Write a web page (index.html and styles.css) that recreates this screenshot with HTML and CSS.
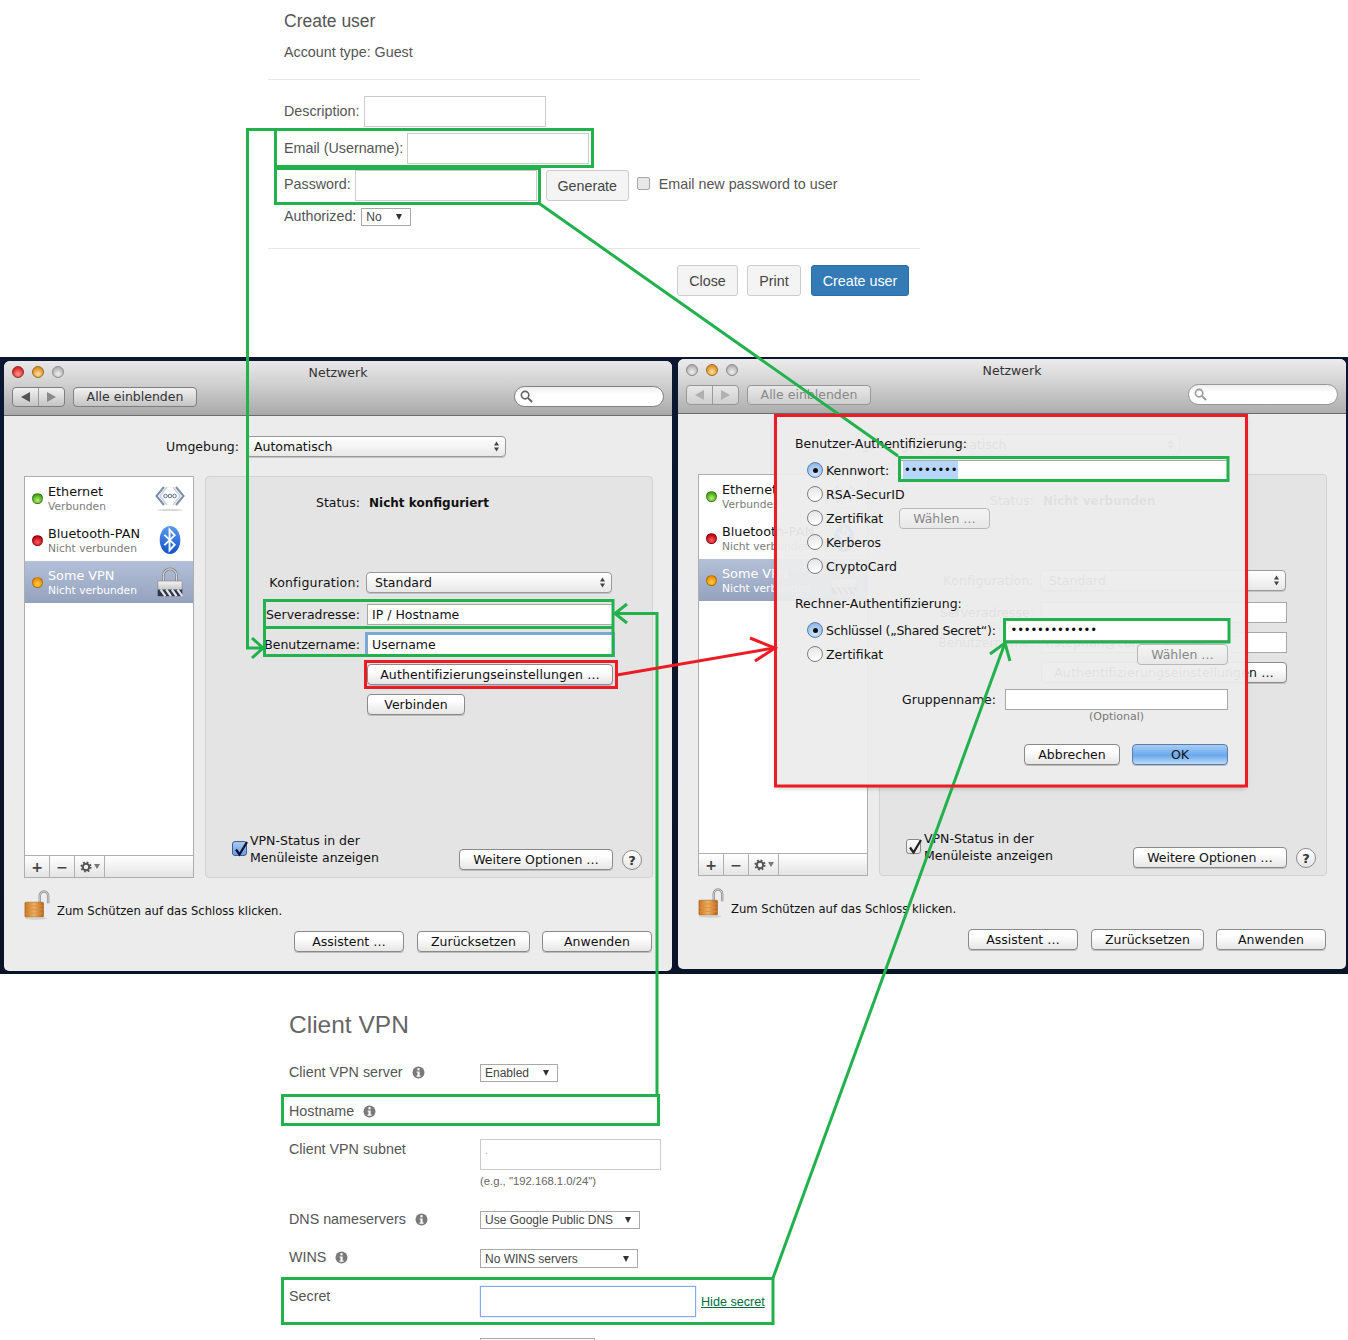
FILE: index.html
```html
<!DOCTYPE html>
<html lang="de">
<head>
<meta charset="utf-8">
<title>VPN setup</title>
<link rel="stylesheet" href="styles.css">
</head>
<body>
<svg class="defs" width="0" height="0" aria-hidden="true">
  <defs>
    <linearGradient id="gBt" x1="0" y1="0" x2="0" y2="1"><stop offset="0" stop-color="#5a9cf0"/><stop offset="1" stop-color="#1450c8"/></linearGradient>
    <linearGradient id="gLockG" x1="0" y1="0" x2="1" y2="0"><stop offset="0" stop-color="#c9741e"/><stop offset=".5" stop-color="#f0b060"/><stop offset="1" stop-color="#b8641a"/></linearGradient>
    <linearGradient id="gSilver" x1="0" y1="0" x2="0" y2="1"><stop offset="0" stop-color="#f4f4f4"/><stop offset="1" stop-color="#a8a8a8"/></linearGradient>
    <symbol id="i-eth" viewBox="0 0 30 28">
      <path d="M9 3 1.5 12 9 21M21 3 28.500 12 21 21" fill="none" stroke="#7d8ea8" stroke-width="2"/>
      <path d="M12 3 5 12 12 21M18 3 25 12 18 21" fill="none" stroke="#c6cfdc" stroke-width="1.400"/>
      <circle cx="10.500" cy="12" r="1.800" fill="none" stroke="#5f6f88"/><circle cx="15" cy="12" r="1.800" fill="none" stroke="#5f6f88"/><circle cx="19.500" cy="12" r="1.800" fill="none" stroke="#5f6f88"/>
      <ellipse cx="15" cy="26" rx="13" ry="1" fill="#d8d8d8"/>
    </symbol>
    <symbol id="i-bt" viewBox="0 0 24 32">
      <ellipse cx="12" cy="16" rx="11" ry="15" fill="url(#gBt)"/>
      <path d="M6 10.500 17 21 11.500 27V5L17 11 6 21.500" fill="none" stroke="#fff" stroke-width="2"/>
    </symbol>
    <symbol id="i-vpn" viewBox="0 0 28 32">
      <path d="M7 15V9a7 7 0 0 1 14 0v6" fill="none" stroke="#8a8a8a" stroke-width="3"/>
      <path d="M7 15V9a7 7 0 0 1 14 0v6" fill="none" stroke="#e6e6e6" stroke-width="1"/>
      <rect x="1" y="15" width="26" height="16" rx="1" fill="url(#gSilver)" stroke="#777" stroke-width=".6"/>
      <rect x="1" y="24" width="26" height="7" fill="#2c3650"/>
      <path d="M4 24l5 7M10 24l5 7M16 24l5 7M22 24l5 7" stroke="#e4e4e4" stroke-width="2.400"/>
    </symbol>
    <symbol id="i-lock" viewBox="0 0 28 32">
      <path d="M17 15V6a4.500 4.500 0 0 1 9 0v8" fill="none" stroke="#8e8e8e" stroke-width="2.600"/>
      <path d="M17 15V6a4.500 4.500 0 0 1 9 0v8" fill="none" stroke="#e8e8e8" stroke-width=".8"/>
      <rect x="1" y="13" width="20" height="16" rx="1" fill="url(#gLockG)" stroke="#a05c18" stroke-width=".6"/>
      <path d="M2 17h18M2 21h18M2 25h18" stroke="#d89048" stroke-width="1"/>
      <ellipse cx="13" cy="30.500" rx="12" ry="1.300" fill="#d0d0d0"/>
    </symbol>
    <symbol id="i-search" viewBox="0 0 14 14">
      <circle cx="5.500" cy="5.500" r="4" fill="none" stroke="#666" stroke-width="1.800"/>
      <path d="M8.500 8.500 13 13" stroke="#666" stroke-width="2.200"/>
    </symbol>
    <symbol id="i-updown" viewBox="0 0 7 13">
      <path d="M3.500 1.500 6 5.500H1zM3.500 11.500 1 7.500h5z" fill="#444"/>
    </symbol>
    <symbol id="i-gear" viewBox="0 0 12 12">
      <circle cx="6" cy="6" r="3.200" fill="none" stroke="#555" stroke-width="2"/>
      <circle cx="6" cy="6" r="4.700" fill="none" stroke="#555" stroke-width="1.800" stroke-dasharray="1.800 1.900"/>
    </symbol>
    <symbol id="i-info" viewBox="0 0 13 13">
      <circle cx="6.500" cy="6.500" r="6" fill="#7a7a7a"/>
      <rect x="5.400" y="2.200" width="2.200" height="2.100" fill="#fff"/>
      <path d="M4.600 5.400h3v4.100h1v1.200H4.500V9.500h1V6.600h-.9z" fill="#fff"/>
    </symbol>
  </defs>
</svg>

<main class="page">

  <section class="create">
    <header class="create-head">
      <h2 class="create-title">Create user</h2>
      <p class="create-type">Account type: Guest</p>
    </header>
    <div class="create-form">
      <div class="web-row"><span class="web-label">Description:</span><span class="web-input"></span></div>
      <div class="web-row"><span class="web-label">Email (Username):</span><span class="web-input"></span></div>
      <div class="web-row web-row-pw"><span class="web-label">Password:</span><span class="web-input"></span><span class="web-btn web-btn-gen">Generate</span><span class="web-check"></span><span class="web-check-label">Email new password to user</span></div>
      <div class="web-row web-row-auth"><span class="web-label">Authorized:</span><span class="web-select web-select-auth">No<i class="caret"></i></span></div>
    </div>
    <footer class="create-foot">
      <span class="web-btn web-btn-lg w-close">Close</span>
      <span class="web-btn web-btn-lg w-print">Print</span>
      <span class="web-btn web-btn-lg web-btn-primary">Create user</span>
    </footer>
  </section>

  <section class="desktop">
    <article class="win win-a">
      <div class="titlebar">
        <div class="lights"><i class="light red"></i><i class="light amber"></i><i class="light off"></i></div>
        <div class="wintitle">Netzwerk</div>
        <div class="toolbar">
          <div class="seg"><span class="seg-cell"><i class="tri tri-l"></i></span><span class="seg-cell"><i class="tri tri-r"></i></span></div>
          <span class="tool-btn">Alle einblenden</span>
          <span class="search"><svg class="search-ico"><use href="#i-search"/></svg></span>
        </div>
      </div>
      <div class="winbody">
        <div class="env"><span class="env-label">Umgebung:</span><span class="mac-select env-select">Automatisch<svg class="updown"><use href="#i-updown"/></svg></span></div>
        <div class="split">
          <div class="svc-list">
            <div class="svc"><i class="dot dot-green"></i><div class="svc-text"><b>Ethernet</b><small>Verbunden</small></div><svg class="svc-ico"><use href="#i-eth"/></svg></div>
            <div class="svc"><i class="dot dot-red"></i><div class="svc-text"><b>Bluetooth-PAN</b><small>Nicht verbunden</small></div><svg class="svc-ico"><use href="#i-bt"/></svg></div>
            <div class="svc svc-sel"><i class="dot dot-orange"></i><div class="svc-text"><b>Some VPN</b><small>Nicht verbunden</small></div><svg class="svc-ico"><use href="#i-vpn"/></svg></div>
            <div class="svc-bar"><span class="bar-cell bar-sm">+</span><span class="bar-cell bar-sm">−</span><span class="bar-cell bar-gear"><svg class="gear"><use href="#i-gear"/></svg><i class="tri-d"></i></span></div>
          </div>
          <div class="panel">
            <div class="pf pf-status"><span class="pf-label">Status:</span><strong>Nicht konfiguriert</strong></div>
            <div class="pf pf-config"><span class="pf-label">Konfiguration:</span><span class="mac-select pf-field">Standard<svg class="updown"><use href="#i-updown"/></svg></span></div>
            <div class="pf pf-server"><span class="pf-label">Serveradresse:</span><span class="mac-input pf-field">IP / Hostname</span></div>
            <div class="pf pf-user"><span class="pf-label">Benutzername:</span><span class="mac-input pf-field is-focus">Username</span></div>
            <div class="pf pf-auth"><span class="pf-label"></span><span class="mac-btn pf-field">Authentifizierungseinstellungen …</span></div>
            <div class="pf pf-conn"><span class="pf-label"></span><span class="mac-btn btn-conn">Verbinden</span></div>
            <div class="panel-foot">
              <span class="mac-check is-blue"><svg viewBox="0 0 16 16"><path d="M3 7.500 6.500 12.500 14 0" fill="none" stroke="#101030" stroke-width="2.200"/></svg></span>
              <span class="check-text">VPN-Status in der<br>Menüleiste anzeigen</span>
              <span class="mac-btn btn-more">Weitere Optionen …</span>
              <span class="help">?</span>
            </div>
          </div>
        </div>
        <div class="lockline"><svg class="lock"><use href="#i-lock"/></svg><span>Zum Schützen auf das Schloss klicken.</span></div>
        <div class="actions"><span class="mac-btn btn-asst">Assistent …</span><span class="mac-btn btn-reset">Zurücksetzen</span><span class="mac-btn btn-apply">Anwenden</span></div>
      </div>
    </article>

    <article class="win win-b">
      <div class="titlebar">
        <div class="lights"><i class="light off"></i><i class="light amber"></i><i class="light off"></i></div>
        <div class="wintitle">Netzwerk</div>
        <div class="toolbar is-dim">
          <div class="seg"><span class="seg-cell"><i class="tri tri-l"></i></span><span class="seg-cell"><i class="tri tri-r"></i></span></div>
          <span class="tool-btn">Alle einblenden</span>
          <span class="search"><svg class="search-ico"><use href="#i-search"/></svg></span>
        </div>
      </div>
      <div class="winbody">
        <div class="env"><span class="env-label">Umgebung:</span><span class="mac-select env-select">Automatisch<svg class="updown"><use href="#i-updown"/></svg></span></div>
        <div class="split">
          <div class="svc-list">
            <div class="svc"><i class="dot dot-green"></i><div class="svc-text"><b>Ethernet</b><small>Verbunden</small></div><svg class="svc-ico"><use href="#i-eth"/></svg></div>
            <div class="svc"><i class="dot dot-red"></i><div class="svc-text"><b>Bluetooth-PAN</b><small>Nicht verbunden</small></div><svg class="svc-ico"><use href="#i-bt"/></svg></div>
            <div class="svc svc-sel"><i class="dot dot-orange"></i><div class="svc-text"><b>Some VPN</b><small>Nicht verbunden</small></div><svg class="svc-ico"><use href="#i-vpn"/></svg></div>
            <div class="svc-bar"><span class="bar-cell bar-sm">+</span><span class="bar-cell bar-sm">−</span><span class="bar-cell bar-gear"><svg class="gear"><use href="#i-gear"/></svg><i class="tri-d"></i></span></div>
          </div>
          <div class="panel">
            <div class="pf pf-status"><span class="pf-label">Status:</span><strong>Nicht verbunden</strong></div>
            <div class="pf pf-config"><span class="pf-label">Konfiguration:</span><span class="mac-select pf-field">Standard<svg class="updown"><use href="#i-updown"/></svg></span></div>
            <div class="pf pf-server"><span class="pf-label">Serveradresse:</span><span class="mac-input pf-field"></span></div>
            <div class="pf pf-user"><span class="pf-label">Benutzername:</span><span class="mac-input pf-field">r.stephan@consultant.de</span></div>
            <div class="pf pf-auth"><span class="pf-label"></span><span class="mac-btn pf-field">Authentifizierungseinstellungen …</span></div>
            <div class="panel-foot panel-foot-b">
              <span class="mac-check"><svg viewBox="0 0 16 16"><path d="M3 7.500 6.500 12.500 14 0" fill="none" stroke="#222" stroke-width="2.200"/></svg></span>
              <span class="check-text">VPN-Status in der<br>Menüleiste anzeigen</span>
              <span class="mac-btn btn-more">Weitere Optionen …</span>
              <span class="help">?</span>
            </div>
          </div>
        </div>
        <div class="lockline"><svg class="lock"><use href="#i-lock"/></svg><span>Zum Schützen auf das Schloss klicken.</span></div>
        <div class="actions"><span class="mac-btn btn-asst">Assistent …</span><span class="mac-btn btn-reset">Zurücksetzen</span><span class="mac-btn btn-apply">Anwenden</span></div>
      </div>

      <div class="sheet">
        <div class="sheet-head">Benutzer-Authentifizierung:</div>
        <div class="opts">
          <div class="opt"><i class="radio is-on"></i><span class="opt-label">Kennwort:</span><span class="mac-input opt-field"><span class="sel-dots">••••••••</span></span></div>
          <div class="opt"><i class="radio"></i><span class="opt-label">RSA-SecurID</span></div>
          <div class="opt"><i class="radio"></i><span class="opt-label">Zertifikat</span><span class="mac-btn is-off btn-pick">Wählen …</span></div>
          <div class="opt"><i class="radio"></i><span class="opt-label">Kerberos</span></div>
          <div class="opt"><i class="radio"></i><span class="opt-label">CryptoCard</span></div>
        </div>
        <div class="sheet-head sheet-head-2">Rechner-Authentifizierung:</div>
        <div class="opts">
          <div class="opt"><i class="radio is-on"></i><span class="opt-label opt-label-wide">Schlüssel („Shared Secret“):</span><span class="mac-input opt-field opt-field-secret"><span class="dots">•••••••••••••</span></span></div>
          <div class="opt opt-end"><i class="radio"></i><span class="opt-label">Zertifikat</span><span class="mac-btn is-off btn-pick">Wählen …</span></div>
        </div>
        <div class="group"><span>Gruppenname:</span><span class="mac-input group-field"></span></div>
        <div class="optional">(Optional)</div>
        <div class="sheet-actions"><span class="mac-btn btn-cancel">Abbrechen</span><span class="mac-btn btn-ok">OK</span></div>
      </div>
    </article>
  </section>

  <section class="vpn">
    <h2 class="vpn-title">Client VPN</h2>
    <div class="vrow v-server"><div class="vlabel">Client VPN server <svg class="info"><use href="#i-info"/></svg></div><span class="web-select v-sel-enabled">Enabled<i class="caret"></i></span></div>
    <div class="vrow v-host"><div class="vlabel">Hostname <svg class="info"><use href="#i-info"/></svg></div></div>
    <div class="vrow v-subnet"><div class="vlabel">Client VPN subnet</div><div><span class="web-input v-input"><em class="tick">.</em></span><div class="v-hint">(e.g., "192.168.1.0/24")</div></div></div>
    <div class="vrow v-dns"><div class="vlabel">DNS nameservers <svg class="info"><use href="#i-info"/></svg></div><span class="web-select v-sel-dns">Use Google Public DNS<i class="caret"></i></span></div>
    <div class="vrow v-wins"><div class="vlabel">WINS <svg class="info"><use href="#i-info"/></svg></div><span class="web-select v-sel-wins">No WINS servers<i class="caret"></i></span></div>
    <div class="vrow v-secret"><div class="vlabel">Secret</div><div class="secret-line"><span class="web-input v-input-secret"></span><a class="hide-link" href="#">Hide secret</a></div></div>
    <div class="vrow v-next"><div class="vlabel"></div><span class="web-select v-sel-next"></span></div>
  </section>

  <svg class="notes" viewBox="0 0 1348 1340" aria-hidden="true">
    <g class="g">
      <path d="M275.500 129.500H592.500V166.500H275.500ZM275.500 168.500H539.500V203.500H275.500Z"/>
      <path d="M275 129.500H247.500V648H262"/>
      <path d="M252 638 263 648 252 658"/>
      <path d="M540 204 898 456"/>
      <path d="M899.500 457.500H1228V480.500H899.500Z"/>
      <path d="M1004.500 619.500H1229V642H1004.500Z"/>
      <path d="M264.500 600.500H613V627.500H264.500ZM264.500 627.500H613V655.500H264.500Z"/>
      <path d="M657 1095V613.500H616"/>
      <path d="M627 604 615 613.500 627 623"/>
      <path d="M282.500 1095.500H658.500V1124.500H282.500Z"/>
      <path d="M282.500 1278.500H773V1323.500H282.500Z"/>
      <path d="M773 1278 1005 643"/>
      <path d="M990 654 1005 643 1010 661"/>
    </g>
    <g class="r">
      <path d="M365.500 661.500H616.500V687.500H365.500Z"/>
      <path d="M775.500 415.500H1246.500V786H775.500Z"/>
      <path d="M617 675 774 648"/>
      <path d="M750 638 775 648 755 661"/>
    </g>
  </svg>
</main>
</body>
</html>
```
FILE: styles.css
```css
* { box-sizing: border-box; }
html, body { margin: 0; padding: 0; background: #fff; }
body { font-family: "Liberation Sans", Arial, sans-serif; color: #555; font-size: 14.300px; }
.defs { position: absolute; }
.page { position: relative; width: 1348px; height: 1340px; overflow: hidden; }

/* create user */
.create { height: 357px; margin-left: 268px; width: 652px; }
.create-head { height: 80px; padding: 11px 16px 0; border-bottom: 1px solid #e5e5e5; }
.create-title { margin: 0; font-size: 17.500px; font-weight: 400; line-height: 20px; }
.create-type { margin: 11px 0 0; line-height: 20px; }
.create-form { height: 169px; padding: 16px 16px 0; border-bottom: 1px solid #e5e5e5; display: flex; flex-direction: column; gap: 6px; }
.web-row { display: flex; align-items: center; gap: 4px; height: 31px; }
.web-label { padding-bottom: 2px; }
.web-row-pw { position: relative; }
.web-row-pw .web-label { padding-bottom: 4px; }
.web-row-auth { height: 18px; margin-top: 1px; gap: 5px; }
.web-input { display: block; width: 182px; height: 31px; border: 1px solid #ccc; background: #fff; }
.web-btn { display: flex; align-items: center; justify-content: center; border: 1px solid #ccc; border-radius: 3px; background: #f4f4f4; color: #444; height: 31px; }
.web-btn-gen { width: 83px; margin-left: 5px; }
.web-check { width: 13px; height: 13px; margin: -4px 0 0 4px; border: 1px solid #a6a6a6; border-radius: 2px; background: #e8e8e8; }
.web-check-label { margin-left: 5px; padding-bottom: 4px; }
.web-select { display: flex; align-items: center; justify-content: space-between; border: 1px solid #a9a9a9; background: #fff; color: #444; font-size: 12px; padding: 0 8px 0 4px; height: 18px; }
.web-select-auth { width: 50px; }
.caret { width: 0; height: 0; border-left: 3.500px solid transparent; border-right: 3.500px solid transparent; border-top: 6px solid #333; }
.create-foot { display: flex; justify-content: flex-end; padding: 16px 11px 0 0; gap: 9px; }
.web-btn-lg { height: 31px; }
.w-close { width: 61px; }
.w-print { width: 54px; }
.web-btn-primary { width: 98px; margin-left: 1px; background: #337ab7; border-color: #2e6da4; color: #fff; }

/* desktop band */
.desktop { height: 617px; display: flex; gap: 6px; padding-left: 4px; align-items: flex-start;
  background: radial-gradient(circle, rgba(150,170,210,.35) 0 .7px, transparent 1px) 0 0 / 23px 17px, linear-gradient(#0b1730, #0a1428); }
.win { position: relative; width: 668px; height: 610px; background: #ececec; border-radius: 6px 6px 5px 5px; font-family: "DejaVu Sans", sans-serif; font-size: 12.500px; color: #111; overflow: hidden; }
.win-a { margin-top: 4px; }
.win-b { margin-top: 2px; }
.titlebar { height: 55px; position: relative; border-bottom: 1px solid #6b6b6b; background: linear-gradient(#e8e8e8, #d5d5d5 35%, #a9a9a9); padding: 5px 8px 0; }
.win-b .titlebar { background: linear-gradient(#ececec, #d8d8d8 35%, #aeaeae); }
.lights { display: flex; gap: 8px; padding-left: 0; }
.light { width: 12px; height: 12px; border-radius: 50%; border: 1px solid #777; }
.light.red { background: radial-gradient(circle at 50% 70%, #ff9a90, #d8262a 70%); border-color: #8c2a2a; }
.light.amber { background: radial-gradient(circle at 50% 70%, #ffe29a, #e0902a 70%); border-color: #9a6a20; }
.light.off { background: radial-gradient(circle at 50% 70%, #f0f0f0, #b4b4b4 70%); border-color: #8a8a8a; }
.wintitle { position: absolute; left: 0; right: 0; top: 4px; text-align: center; color: #333; line-height: 16px; font-size: 12.500px; }
.toolbar { display: flex; align-items: center; margin-top: 8px; }
.seg { display: flex; width: 53px; height: 20px; border: 1px solid #7e7e7e; border-radius: 4px; background: linear-gradient(#f2f2f2, #c4c4c4); }
.seg-cell { flex: 1; display: flex; align-items: center; justify-content: center; }
.seg-cell + .seg-cell { border-left: 1px solid #9a9a9a; }
.tri { width: 0; height: 0; border-top: 5px solid transparent; border-bottom: 5px solid transparent; }
.tri-l { border-right: 9px solid #555; }
.tri-r { border-left: 9px solid #8a8a8a; }
.tool-btn { margin-left: 8px; width: 124px; height: 20px; border: 1px solid #7e7e7e; border-radius: 4px; background: linear-gradient(#f2f2f2, #c4c4c4); display: flex; align-items: center; justify-content: center; color: #333; }
.search { margin-left: 317px; width: 150px; height: 21px; border: 1px solid #808080; border-radius: 11px; background: linear-gradient(#eee, #fff 40%); display: flex; align-items: center; padding-left: 5px; }
.search-ico { width: 13px; height: 13px; }
.is-dim .seg, .is-dim .tool-btn { background: linear-gradient(#e8e8e8, #cfcfcf); border-color: #979797; color: #888; }
.is-dim .tri-l, .is-dim .tri-r { border-right-color: #b0b0b0; border-left-color: #b0b0b0; }
.is-dim .search-ico { opacity: .65; }
.is-dim .search { border-color: #979797; }

.winbody { padding: 20px 20px 0; }
.env { display: flex; align-items: center; gap: 7px; height: 21px; }
.env-label { width: 215px; text-align: right; }
.mac-select { display: flex; align-items: center; justify-content: space-between; height: 21px; border: 1px solid #9a9a9a; border-radius: 4px; background: linear-gradient(#fff, #e8e8e8); padding: 0 5px 0 8px; box-shadow: 0 1px 0 #c4c4c4; }
.env-select { width: 260px; padding-left: 7px; }
.updown { width: 7px; height: 13px; flex: none; }
.split { display: grid; grid-template-columns: 170px 448px; column-gap: 11px; margin-top: 19px; height: 402px; }
.svc-list { display: flex; flex-direction: column; border: 1px solid #aeaeae; background: #fff; }
.svc { height: 42px; display: flex; align-items: center; padding: 0 8px 0 7px; }
.dot { width: 11px; height: 11px; border-radius: 50%; flex: none; margin: 0 5px 0 0; border: 1px solid rgba(0,0,0,.25); }
.dot-green { background: radial-gradient(circle at 50% 70%, #b8f070, #3ca010 75%); }
.dot-red { background: radial-gradient(circle at 50% 70%, #ff6060, #b80010 75%); }
.dot-orange { background: radial-gradient(circle at 50% 70%, #ffd040, #ea8a00 75%); }
.svc-text { flex: 1; display: flex; flex-direction: column; }
.svc-text b { font-weight: 400; font-size: 12.800px; line-height: 15px; white-space: nowrap; }
.svc-text small { font-size: 10.700px; line-height: 13px; margin-top: 1px; color: #7c7c7c; white-space: nowrap; }
.svc-ico { width: 30px; height: 30px; flex: none; }
.svc-sel { background: linear-gradient(#b4c0d8, #94a2be); }
.svc-sel b, .svc-sel small { color: #fff; }
.svc-bar { margin-top: auto; height: 22px; display: flex; border-top: 1px solid #b0b0b0; background: linear-gradient(#fff, #e4e4e4); }
.bar-cell { display: flex; align-items: center; justify-content: center; border-right: 1px solid #b0b0b0; font-weight: 700; color: #444; font-size: 14px; }
.bar-sm { width: 25px; }
.bar-gear { width: 30px; gap: 2px; }
.gear { width: 12px; height: 12px; }
.tri-d { width: 0; height: 0; border-left: 3.500px solid transparent; border-right: 3.500px solid transparent; border-top: 5px solid #777; }
.panel { position: relative; display: flex; flex-direction: column; background: #e4e4e4; border: 1px solid #d2d2d2; border-radius: 4px; padding-bottom: 7px; }
.pf { display: flex; align-items: center; gap: 7px; }
.pf-label { width: 154px; flex: none; text-align: right; }
.pf-field { width: 246px; }
.pf-status { height: 18px; margin-top: 16px; gap: 9px; }
.pf-status strong { font-weight: 700; font-size: 12px; padding-top: 1px; }
.pf-config { height: 21px; margin-top: 61px; }
.pf-config .pf-label { letter-spacing: .2px; }
.pf-config .mac-select { margin-left: -1px; }
.pf-server { height: 21px; margin-top: 11px; }
.pf-user { height: 21px; margin-top: 9px; }
.pf-auth { height: 21px; margin-top: 9px; letter-spacing: .13px; }
.pf-conn { height: 21px; margin-top: 9px; }
.mac-input { display: flex; align-items: center; height: 21px; background: #fff; border: 1px solid #a8a8a8; padding-left: 4px; }
.is-focus { box-shadow: 0 0 0 2px #7aa7d8; border-color: #7aa7d8; }
.mac-btn { display: flex; align-items: center; justify-content: center; height: 21px; border: 1px solid #8a8a8a; border-radius: 4px; background: linear-gradient(#fff 30%, #e6e6e6); box-shadow: 0 1px 0 #bdbdbd; white-space: nowrap; }
.btn-conn { width: 98px; }
.panel-foot { margin-top: auto; display: flex; align-items: flex-end; padding-left: 26px; }
.panel-foot-b { padding-left: 26px; }
.mac-check { width: 15px; height: 15px; margin: 0 3px 14px 0; border: 1px solid #888; border-radius: 3px; background: linear-gradient(#fff, #e4e4e4); display: block; }
.mac-check svg { width: 16px; height: 16px; display: block; overflow: visible; }
.mac-check.is-blue { background: linear-gradient(#a8c8f0, #6f9fe0); border-color: #3f5f90; }
.check-text { width: 209px; line-height: 17px; margin-bottom: 4px; }
.btn-more { width: 154px; }
.help { width: 20px; height: 20px; margin-left: 9px; border-radius: 50%; border: 1px solid #8a8a8a; background: linear-gradient(#fff, #e6e6e6); display: flex; align-items: center; justify-content: center; font-weight: 700; font-size: 13px; color: #333; }
.lockline { display: flex; align-items: flex-end; height: 30px; margin-top: 12px; gap: 7px; font-size: 11.600px; }
.lock { width: 26px; height: 30px; flex: none; }
.lockline span { line-height: 17px; }
.actions { display: flex; justify-content: flex-end; gap: 13px; margin-top: 11px; padding-right: 0; }
.btn-asst { width: 110px; }
.btn-reset { width: 113px; }
.btn-apply { width: 110px; margin-left: -1px; }

/* sheet */
.sheet { position: absolute; left: 98px; top: 55px; width: 470px; height: 372px; padding: 22px 18px 21px 19px; background: rgba(236,236,236,.95); display: flex; flex-direction: column; box-shadow: 0 2px 5px rgba(0,0,0,.25); }
.sheet-head { line-height: 16px; height: 16px; margin-bottom: 6px; }
.sheet-head-2 { margin-top: 18px; margin-bottom: 6px; }
.opts { padding-left: 12px; }
.opt { display: flex; align-items: center; height: 24px; gap: 3px; }
.radio { width: 16px; height: 16px; border-radius: 50%; border: 1px solid #7e7e7e; background: linear-gradient(#e6e6e6, #fff); flex: none; position: relative; }
.radio.is-on { background: radial-gradient(circle at 50% 70%, #d8ecff, #8ab4e8 80%); border-color: #5f7fa8; }
.radio.is-on::after { content: ""; position: absolute; left: 4.500px; top: 4.500px; width: 5px; height: 5px; border-radius: 50%; background: #111; }
.opt-label { width: 64px; white-space: nowrap; }
.opt-label-wide { width: 170px; letter-spacing: -.27px; }
.opt-field { flex: 1; height: 21px; margin-left: 6px; padding-left: 3px; }
.opt-field-secret { margin-left: 6px; flex: none; width: 224px; padding-left: 5px; }
.sel-dots { background: #b6d6fd; line-height: 18px; font-size: 11.500px; letter-spacing: -.1px; padding: 0 1px; }
.dots { font-size: 11.500px; letter-spacing: -.15px; }
.btn-pick { width: 91px; height: 21px; margin-left: 6px; }
.opt-end .btn-pick { margin-left: auto; }
.is-off { color: #888; background: linear-gradient(#f4f4f4, #e8e8e8); border-color: #b8b8b8; box-shadow: none; }
.group { display: flex; align-items: center; justify-content: flex-end; gap: 9px; height: 21px; margin-top: 23px; }
.group-field { width: 223px; }
.optional { align-self: flex-end; width: 223px; text-align: center; font-size: 11px; line-height: 14px; color: #777; }
.sheet-actions { margin-top: auto; display: flex; justify-content: flex-end; gap: 12px; }
.btn-cancel { width: 96px; }
.btn-ok { width: 96px; background: linear-gradient(#a8cdf5, #6aa8ee 55%, #bcdcf8); border-color: #5a7ea8; }

/* client vpn */
.vpn { padding: 36px 0 0 289px; }
.vpn-title { margin: 0; font-size: 24.500px; font-weight: 400; line-height: 30px; color: #666; }
.vrow { display: grid; grid-template-columns: 191px auto; justify-content: start; align-items: start; }
.vlabel { display: flex; align-items: center; gap: 9px; line-height: 16px; color: #555; }
.info { width: 13px; height: 13px; flex: none; }
.v-server { margin-top: 24px; }
.v-host { margin-top: 21px; }
.v-subnet { margin-top: 20px; }
.v-subnet .vlabel, .v-secret .vlabel { line-height: 20px; }
.v-input { width: 181px; height: 31px; padding-left: 4px; line-height: 18px; }
.tick { color: #e0a070; font-style: normal; font-size: 11px; }
.v-hint { font-size: 11.300px; line-height: 14px; margin-top: 4px; color: #666; }
.v-dns { margin-top: 23px; }
.v-wins { margin-top: 20px; }
.v-sel-enabled { width: 78px; }
.v-sel-dns { width: 160px; }
.v-sel-wins { width: 158px; height: 19px; }
.v-secret { margin-top: 18px; }
.secret-line { display: flex; align-items: flex-end; gap: 5px; }
.v-input-secret { width: 216px; border-color: #80a9f0; box-shadow: 0 0 1px #80a9f0; }
.hide-link { color: #006e3c; font-size: 12.600px; line-height: 22px; margin-bottom: 4px; }
.v-next { margin-top: 21px; }
.v-sel-next { width: 115px; }

/* annotations */
.notes { position: absolute; left: 0; top: 0; width: 1348px; height: 1340px; pointer-events: none; }
.notes path { fill: none; stroke-width: 3; }
.notes .g path { stroke: #22b14c; }
.notes .r path { stroke: #ed1c24; }
```
